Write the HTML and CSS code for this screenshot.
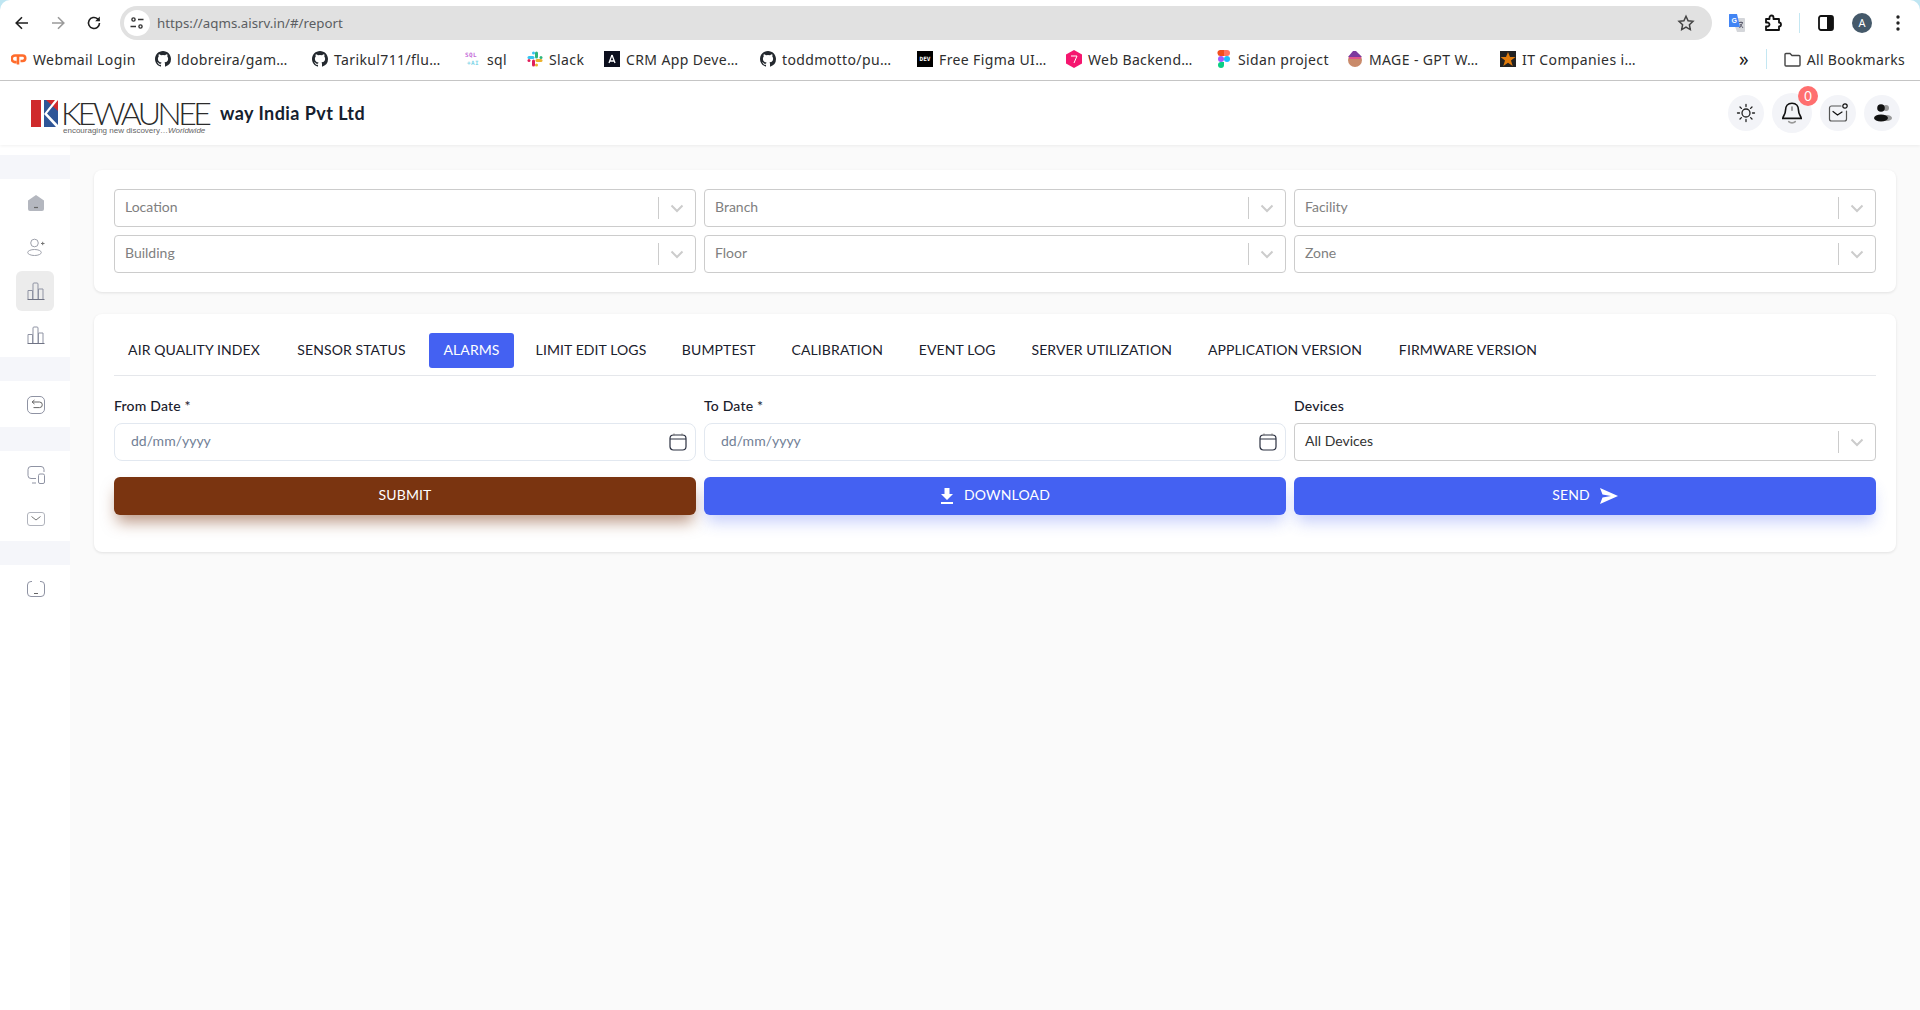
FILE: index.html
```html
<!DOCTYPE html>
<html lang="en">
<head>
	<meta charset="UTF-8">
	<title>Report</title>
	<link rel="stylesheet" href="styles.css">
</head>
<body>
	<div class="chrome">
		<div class="toolbar">
			<span class="tool"><svg width="16" height="16" viewBox="0 0 16 16" fill="none" stroke="#1f1f1f" stroke-width="1.6"><path d="M14 8H2.5M8 2.2 2.2 8 8 13.8"/></svg></span>
			<span class="tool"><svg width="16" height="16" viewBox="0 0 16 16" fill="none" stroke="#9a9a9a" stroke-width="1.6"><path d="M2 8h11.5M8 2.2 13.8 8 8 13.8"/></svg></span>
			<span class="tool"><svg width="16" height="16" viewBox="0 0 16 16" fill="none" stroke="#1f1f1f" stroke-width="1.6"><path d="M13.5 8A5.5 5.5 0 1 1 11.6 3.8L13.5 5.6"/><path d="M13.8 1.6v4.6H9.2z" fill="#1f1f1f" stroke="none"/></svg></span>
			<div class="omnibox">
				<span class="site-chip"><svg width="16" height="16" viewBox="0 0 16 16" fill="none" stroke="#333" stroke-width="1.4"><circle cx="4.5" cy="4.5" r="1.6"/><path d="M9 4.5h5.5M1.5 11.5H7"/><circle cx="11.5" cy="11.5" r="1.6"/></svg></span>
				<span class="url">https://aqms.aisrv.in/#/report</span>
				<svg class="star" width="18" height="18" viewBox="0 0 18 18" fill="none" stroke="#444" stroke-width="1.5"><path d="M9 2.2l2.1 4.5 4.9.6-3.6 3.4.9 4.9L9 13.2l-4.3 2.4.9-4.9L2 7.3l4.9-.6z"/></svg>
			</div>
			<div class="tools-right">
				<span class="tool"><svg width="18" height="20" viewBox="0 0 18 20"><path d="M4 5h12a1 1 0 0 1 1 1v12a1 1 0 0 1-1 1H9z" fill="#d4d6da"/><path d="M11 9.500h4M13 8.500v1M11.500 15l3-5M12 11l3 4" stroke="#556" stroke-width=".9" fill="none"/><path d="M1 1.500A.5.5 0 0 1 1.500 1H9l3 13H1z" fill="#4285f4"/><text class="gt" x="3.500" y="10">G</text></svg></span>
				<span class="tool"><svg width="18" height="18" viewBox="0 0 18 18" fill="none" stroke="#111" stroke-width="1.800"><path d="M2 5h3.500V3.500a2 2 0 0 1 4 0V5H15v3.500a2 2 0 0 1 0 4V16H2v-3.500h1.500a2 2 0 0 0 0-4H2z" stroke-linejoin="round"/></svg></span>
				<span class="tool-sep"></span>
				<span class="tool"><svg width="16" height="16" viewBox="0 0 16 16"><rect x="1" y="1" width="14" height="14" rx="2" fill="none" stroke="#111" stroke-width="1.800"/><rect x="9" y="1" width="6" height="14" fill="#111"/></svg></span>
				<span class="tool"><span class="avatar">A</span></span>
				<span class="tool"><svg width="4" height="16" viewBox="0 0 4 16" fill="#222"><circle cx="2" cy="2" r="1.700"/><circle cx="2" cy="8" r="1.700"/><circle cx="2" cy="14" r="1.700"/></svg></span>
			</div>
		</div>
		<div class="bookmarks">
			<a class="mark"><svg width="16" height="16" viewBox="0 0 16 16" fill="none" stroke="#ff6c2c" stroke-width="2.600"><path d="M6 4.500H4a3.300 3.300 0 0 0 0 6.600h1.500M7 13.500V4.500h4.500a2.700 2.700 0 0 1 0 5.500H9.500"/></svg>Webmail Login</a>
			<a class="mark"><svg class="gh" width="16" height="16" viewBox="0 0 16 16"><use href="#octo"/></svg>ldobreira/gam…</a>
			<a class="mark"><svg class="gh" width="16" height="16" viewBox="0 0 16 16"><use href="#octo"/></svg>Tarikul711/flu…</a>
			<a class="mark"><svg width="16" height="18" viewBox="0 0 16 18"><text class="sqlfav" x="0" y="7" fill="#c56bd8">SQL</text><text class="sqlfav" x="2" y="15" fill="#7fd6e8">+AI</text></svg>sql</a>
			<a class="mark"><svg width="16" height="16" viewBox="0 0 16 16" fill="none" stroke-width="3" stroke-linecap="round"><path d="M2 6.500h4" stroke="#36c5f0"/><path d="M6.500 2v0" stroke="#36c5f0"/><path d="M9.500 2v4" stroke="#2eb67d"/><path d="M14 6.500h0" stroke="#2eb67d"/><path d="M14 9.500h-4" stroke="#ecb22e"/><path d="M9.500 14v0" stroke="#ecb22e"/><path d="M6.500 14v-4" stroke="#e01e5a"/><path d="M2 9.500h0" stroke="#e01e5a"/></svg>Slack</a>
			<a class="mark"><svg width="16" height="16" viewBox="0 0 16 16"><rect width="16" height="16" fill="#0c0f1e"/><path d="M8 4 5 12M8 4l3 8M6 10h4" stroke="#fff" stroke-width="1.300" fill="none"/></svg>CRM App Deve…</a>
			<a class="mark"><svg class="gh" width="16" height="16" viewBox="0 0 16 16"><use href="#octo"/></svg>toddmotto/pu…</a>
			<a class="mark"><span class="dev">DEV</span>Free Figma UI…</a>
			<a class="mark"><svg width="16" height="18" viewBox="0 0 16 18"><path d="M8 0l8 4.500v9L8 18l-8-4.500v-9z" fill="#f5166f"/><path d="M5 6h6L8 13" stroke="#fff" fill="none"/></svg>Web Backend…</a>
			<a class="mark"><svg width="16" height="18" viewBox="0 0 16 18"><path d="M4 0h4v6H5a3 3 0 0 1-1-6z" fill="#f24e1e"/><path d="M8 0h3a3 3 0 0 1 0 6H8z" fill="#ff7262"/><rect x="2" y="6" width="6" height="6" rx="3" fill="#a259ff"/><circle cx="11" cy="9" r="3" fill="#1abcfe"/><path d="M5 12h3v3a3 3 0 1 1-3-3z" fill="#0acf83"/></svg>Sidan project</a>
			<a class="mark"><svg width="16" height="18" viewBox="0 0 16 18"><circle cx="8" cy="10" r="7" fill="#c98a6a"/><path d="M1 7h14L9 1H6z" fill="#7c3a9e"/><rect x="2" y="7" width="12" height="2" fill="#e0568a"/></svg>MAGE - GPT W…</a>
			<a class="mark"><svg width="16" height="16" viewBox="0 0 16 16"><rect width="16" height="16" fill="#222"/><path d="M8 1l2 5h5.500l-4.500 3.500 1.700 5.500L8 11.700 3.300 15 5 9.500.5 6H6z" fill="#e07b0c"/></svg>IT Companies i…</a>
			<div class="marks-right">
				<span class="more">»</span>
				<span class="marks-sep"></span>
				<svg width="17" height="15" viewBox="0 0 17 15" fill="none" stroke="#444" stroke-width="1.400"><path d="M1 2.500A1 1 0 0 1 2 1.500h4l2 2h7a1 1 0 0 1 1 1v8.500a1 1 0 0 1-1 1H2a1 1 0 0 1-1-1z"/></svg>
				<span class="all-marks">All Bookmarks</span>
			</div>
		</div>
	</div>

	<header class="app-header">
		<div class="logo">
			<svg width="27" height="27" viewBox="0 0 27 27"><rect width="10" height="27" fill="#cf2a2c"/><path d="M13 0h14v27H13z" fill="#2f5597"/><path d="M15 0h12v11z" fill="#cf2a2c"/><path d="M13 14 24 0h3L16 13.500 27 25v2h-2L13 14z" fill="#fff"/></svg>
			<div class="logo-text">
				<span class="logo-name">KEWAUNEE</span>
				<span class="logo-tag">encouraging new discovery…<i>Worldwide</i></span>
			</div>
		</div>
		<span class="org">way India Pvt Ltd</span>
		<div class="header-icons">
			<button class="round"><svg width="20" height="20" viewBox="0 0 20 20" fill="none" stroke="#222" stroke-width="1.300" stroke-linecap="round"><circle cx="10" cy="10" r="4"/><path d="M10 1.500v2M10 16.500v2M1.500 10h2M16.500 10h2M4 4l1.400 1.400M14.600 14.600 16 16M4 16l1.400-1.400M14.600 5.400 16 4"/></svg></button>
			<button class="round round-bell"><svg width="26" height="26" viewBox="0 0 24 24" fill="none" stroke="#111" stroke-width="1.500" stroke-linecap="round"><path d="M12 3c-4 0-6 3-6 6.500 0 4-2.500 5.500-2.500 7.500h17c0-2-2.500-3.500-2.500-7.500C18 6 16 3 12 3z"/><path d="M12 6.500v3" stroke="#888"/><path d="M9 20c1.500 1.500 4.500 1.500 6 0" stroke="#999"/></svg><span class="badge">0</span></button>
			<button class="round"><svg width="22" height="22" viewBox="0 0 22 22" fill="none" stroke="#555" stroke-width="1.200" stroke-linecap="round"><path d="M14 4H4.500A2 2 0 0 0 2.500 6v11a2 2 0 0 0 2 2h13a2 2 0 0 0 2-2V9"/><path d="M6 9.500l4.500 3.500 4.500-3" stroke="#111"/><circle cx="18" cy="4" r="2.200" stroke="#111"/></svg></button>
			<button class="round"><svg width="22" height="22" viewBox="0 0 22 22"><circle cx="15" cy="6" r="3" fill="#999"/><ellipse cx="16" cy="16" rx="5" ry="3" fill="#999"/><circle cx="10" cy="6" r="3.800" fill="#111"/><ellipse cx="10" cy="16" rx="7" ry="3.500" fill="#111"/></svg></button>
		</div>
	</header>

	<div class="app-body">
		<nav class="sidebar">
			<div class="side-band"></div>
			<a class="side-item"><svg width="18" height="18" viewBox="0 0 18 18"><path d="M1 6.500 9 1l8 5.500V15a2 2 0 0 1-2 2H3a2 2 0 0 1-2-2z" fill="#b4b7bf"/><path d="M7 13.500h4" stroke="#666" stroke-width="1.200"/></svg></a>
			<a class="side-item"><svg width="18" height="18" viewBox="0 0 18 18" fill="none" stroke="#9ea1ab" stroke-width="1"><circle cx="7.500" cy="5" r="3.800"/><ellipse cx="7.500" cy="14.500" rx="6.800" ry="3"/><path d="M14 5.500h3.500M15.700 3.800v3.400" stroke="#777"/></svg></a>
			<a class="side-item is-active"><svg width="18" height="18" viewBox="0 0 18 18"><use href="#bars"/></svg></a>
			<a class="side-item"><svg width="18" height="18" viewBox="0 0 18 18"><use href="#bars"/></svg></a>
			<div class="side-band"></div>
			<a class="side-item"><svg width="18" height="18" viewBox="0 0 18 18" fill="none" stroke="#8f93a3" stroke-width="1"><rect x=".5" y=".5" width="17" height="17" rx="4.500"/><path d="M6 6h6.500a2.800 2.800 0 0 1 0 5.600H6.500M7.500 4 5 6l2.500 2" stroke="#666"/></svg></a>
			<div class="side-band"></div>
			<a class="side-item"><svg width="18" height="18" viewBox="0 0 18 18" fill="none" stroke="#8f93a3" stroke-width="1"><path d="M17 6V3.500a3 3 0 0 0-3-3H4a3 3 0 0 0-3 3v6a3 3 0 0 0 3 3h5M5 17h4"/><rect x="11.500" y="8" width="6" height="9.500" rx="1.500"/></svg></a>
			<a class="side-item"><svg width="18" height="14" viewBox="0 0 18 14" fill="none" stroke="#b0b3bc" stroke-width="1"><rect x=".5" y=".5" width="17" height="13" rx="2.500"/><path d="M4.500 4.500 9 8l4.500-3.500" stroke="#777"/></svg></a>
			<div class="side-band"></div>
			<a class="side-item"><svg width="18" height="16" viewBox="0 0 18 16" fill="none" stroke="#8f93a3" stroke-width="1"><path d="M5 .5H4A3.500 3.500 0 0 0 .5 4v8A3.500 3.500 0 0 0 4 15.500h10a3.500 3.500 0 0 0 3.500-3.500V4A3.500 3.500 0 0 0 14 .5h-1"/><path d="M7 12.500h4" stroke="#666"/></svg></a>
		</nav>

		<main class="main">
			<section class="card filter-card">
				<div class="grid-3">
					<div class="select"><span class="ph">Location</span><span class="sel-sep"></span><svg class="chev"><use href="#chev"/></svg></div>
					<div class="select"><span class="ph">Branch</span><span class="sel-sep"></span><svg class="chev"><use href="#chev"/></svg></div>
					<div class="select"><span class="ph">Facility</span><span class="sel-sep"></span><svg class="chev"><use href="#chev"/></svg></div>
					<div class="select"><span class="ph">Building</span><span class="sel-sep"></span><svg class="chev"><use href="#chev"/></svg></div>
					<div class="select"><span class="ph">Floor</span><span class="sel-sep"></span><svg class="chev"><use href="#chev"/></svg></div>
					<div class="select"><span class="ph">Zone</span><span class="sel-sep"></span><svg class="chev"><use href="#chev"/></svg></div>
				</div>
			</section>

			<section class="card report-card">
				<ul class="tabs">
					<li>AIR QUALITY INDEX</li>
					<li>SENSOR STATUS</li>
					<li class="selected">ALARMS</li>
					<li>LIMIT EDIT LOGS</li>
					<li>BUMPTEST</li>
					<li>CALIBRATION</li>
					<li>EVENT LOG</li>
					<li>SERVER UTILIZATION</li>
					<li>APPLICATION VERSION</li>
					<li>FIRMWARE VERSION</li>
				</ul>
				<div class="grid-3 form-row">
					<div class="field">
						<label>From Date *</label>
						<div class="date"><span>dd/mm/yyyy</span><svg class="cal"><use href="#cal"/></svg></div>
					</div>
					<div class="field">
						<label>To Date *</label>
						<div class="date"><span>dd/mm/yyyy</span><svg class="cal"><use href="#cal"/></svg></div>
					</div>
					<div class="field">
						<label>Devices</label>
						<div class="select"><span class="val">All Devices</span><span class="sel-sep"></span><svg class="chev"><use href="#chev"/></svg></div>
					</div>
				</div>
				<div class="grid-3 btn-row">
					<button class="btn btn-brown"><span>SUBMIT</span></button>
					<button class="btn btn-blue"><svg width="14" height="16" viewBox="0 0 14 16" fill="#fff"><path d="M4.500 0h5v6H13L7 12 1 6h3.500z"/><rect x="1" y="14" width="12" height="2"/></svg><span>DOWNLOAD</span></button>
					<button class="btn btn-blue"><span>SEND</span><svg width="18" height="16" viewBox="0 0 18 16" fill="#fff"><path d="M0 0l18 8-18 8 2.500-6.500L11 8 2.500 6.500z"/></svg></button>
				</div>
			</section>
		</main>
	</div>

	<svg class="defs" width="0" height="0">
		<symbol id="octo" viewBox="0 0 16 16"><path fill="#24292f" d="M8 0C3.580 0 0 3.580 0 8c0 3.540 2.290 6.530 5.470 7.590.4.070.55-.17.55-.38v-1.340c-2.230.48-2.700-1.070-2.700-1.070-.36-.93-.89-1.170-.89-1.170-.73-.5.050-.49.050-.49.800.060 1.230.83 1.230.83.710 1.220 1.870.870 2.330.66.070-.52.280-.87.510-1.070-1.780-.2-3.640-.89-3.640-3.950 0-.87.310-1.590.820-2.150-.08-.2-.36-1.020.08-2.120 0 0 .67-.21 2.200.820a7.600 7.600 0 0 1 4 0c1.530-1.040 2.200-.82 2.200-.82.44 1.100.16 1.920.08 2.120.51.560.82 1.270.82 2.150 0 3.070-1.870 3.750-3.650 3.950.29.250.54.730.54 1.480v2.200c0 .21.150.46.550.38A8 8 0 0 0 16 8c0-4.420-3.580-8-8-8z"/></symbol>
		<symbol id="bars" viewBox="0 0 18 18"><path d="M.5 17.500h17" stroke="#6f7384" fill="none"/><path d="M1 17V8.500h4.500V17M6 17V2a1 1 0 0 1 1-1h3a1 1 0 0 1 1 1v15M11.500 17V7H16v10" stroke="#8f93a3" fill="none"/></symbol>
		<symbol id="chev" viewBox="0 0 20 20"><path d="M4.500 7.500 10 13l5.500-5.500" fill="none" stroke="#ccc" stroke-width="2"/></symbol>
		<symbol id="cal" viewBox="0 0 18 18"><rect x="1" y="2" width="16" height="15" rx="3.500" fill="none" stroke="#2b3040" stroke-width="1.200"/><path d="M1 6h16" stroke="#2b3040"/><path d="M5 .5v2M13 .5v2" stroke="#777"/></symbol>
	</svg>
</body>
</html>
```

FILE: styles.css
```css
*{
	margin: 0;
	padding: 0;
	box-sizing: border-box;
}
html, body{
	height: 1010px;
	overflow: hidden;
}
body{
	background: #bfe6f2;
	font-family: "Lato", "Noto Sans", sans-serif;
	color: #1a202c;
}
ul{
	list-style: none;
}
a{
	color: inherit;
}
button{
	font-family: inherit;
	border: none;
}
.defs{
	position: absolute;
}

/* browser bars */
.chrome{
	height: 81px;
	background: #fff;
	border-radius: 10px 10px 0 0;
	border-bottom: 1px solid #c7c7c7;
	font-family: "Noto Sans", sans-serif;
}
.toolbar{
	display: flex;
	align-items: center;
	height: 40px;
	padding: 6px 4px 0;
}
.tool{
	width: 36px;
	height: 34px;
	display: flex;
	align-items: center;
	justify-content: center;
	flex: none;
}
.omnibox{
	flex: 1;
	height: 34px;
	margin-left: 8px;
	margin-right: 7px;
	padding: 0 15px 0 4px;
	border-radius: 17px;
	background: #e1e1e1;
	display: flex;
	align-items: center;
}
.site-chip{
	width: 26px;
	height: 26px;
	border-radius: 50%;
	background: #fff;
	display: flex;
	align-items: center;
	justify-content: center;
}
.url{
	margin-left: 7px;
	font-size: 13.300px;
	color: #5b5e62;
	flex: 1;
}
.star{
	margin-right: 2px;
}
.tools-right{
	display: flex;
	align-items: center;
}
.tool-sep{
	width: 1px;
	height: 20px;
	margin: 0 8px 0 8px;
	background: #c4e7f2;
}
.gt{
	font: bold 7px "Liberation Sans", sans-serif;
	fill: #fff;
}
.avatar{
	width: 20px;
	height: 20px;
	border-radius: 50%;
	background: #45596a;
	color: #fff;
	font-size: 11px;
	text-align: center;
	line-height: 20px;
}
.bookmarks{
	height: 40px;
	padding: 0 0 2px 11px;
	display: grid;
	grid-template-columns: 144px 157px 153px 62px 77px 156px 157px 149px 150px 131px 153px 215px 1fr;
	align-items: center;
	font-size: 14px;
	letter-spacing: .38px;
	color: #2e2e2e;
}
.mark{
	display: flex;
	align-items: center;
	gap: 6px;
	white-space: nowrap;
}
.sqlfav{
	font: bold 6px "DejaVu Sans Mono", monospace;
}
.dev{
	width: 16px;
	height: 16px;
	background: #000;
	color: #fff;
	font: bold 6px "DejaVu Sans Mono", monospace;
	letter-spacing: 0;
	line-height: 16px;
	text-align: center;
}
.marks-right{
	display: flex;
	align-items: center;
	justify-content: flex-end;
	padding-right: 15px;
	white-space: nowrap;
	letter-spacing: .3px;
}
.more{
	font-size: 19px;
	line-height: 20px;
	color: #222;
}
.marks-sep{
	width: 1px;
	height: 20px;
	margin: 0 17px 0 17px;
	background: #c4e7f2;
}
.all-marks{
	margin-left: 6px;
}

/* app header */
.app-header{
	position: relative;
	z-index: 2;
	height: 64px;
	padding-left: 31px;
	background: #fff;
	display: flex;
	align-items: center;
	box-shadow: 0 1px 3px rgba(0,0,0,.06);
}
.logo{
	width: 189px;
	display: flex;
	gap: 3px;
	height: 40px;
	padding-top: 4px;
	margin-top: 5px;
}
.logo-text{
	display: flex;
	flex-direction: column;
}
.logo-name{
	font-family: "Lato", sans-serif;
	font-weight: 300;
	font-size: 32px;
	line-height: 26px;
	letter-spacing: -3.500px;
	color: #2b2b2b;
}
.logo-tag{
	font-family: "Liberation Sans", sans-serif;
	font-size: 8px;
	line-height: 10px;
	margin-left: 2px;
	color: #666;
	white-space: nowrap;
}
.org{
	font-size: 18px;
	font-weight: 700;
	letter-spacing: .45px;
	color: #15202e;
}
.header-icons{
	margin-left: auto;
	padding-right: 20px;
	display: flex;
	align-items: center;
	gap: 8px;
}
.round{
	position: relative;
	width: 36px;
	height: 36px;
	border-radius: 50%;
	background: #f3f4f8;
	display: flex;
	align-items: center;
	justify-content: center;
}
.round-bell{
	width: 40px;
	height: 40px;
}
.badge{
	position: absolute;
	top: -7px;
	right: -6px;
	width: 20px;
	height: 20px;
	border-radius: 50%;
	background: #ff6f6f;
	color: #fff;
	font-size: 13px;
	line-height: 20px;
	text-align: center;
}

/* page */
.app-body{
	display: flex;
	height: 865px;
}
.sidebar{
	width: 70px;
	flex: none;
	padding-top: 10px;
	background: #fff;
	display: flex;
	flex-direction: column;
	align-items: center;
	box-shadow: 1px 0 3px rgba(0,0,0,.04);
}
.side-band{
	width: 100%;
	height: 24px;
	background: #f5f6fa;
	flex: none;
}
.side-item{
	width: 38px;
	height: 40px;
	margin: 2px 0;
	padding-left: 2px;
	border-radius: 6px;
	display: flex;
	align-items: center;
	justify-content: center;
	flex: none;
}
.side-item.is-active{
	background: #ececec;
}
.side-band + .side-item{
	margin-top: 4px;
}
.main{
	flex: 1;
	padding: 25px 24px;
	background: #fafafa;
}
.card{
	background: #fff;
	border-radius: 8px;
	box-shadow: 0 1px 3px rgba(0,0,0,.1);
	padding: 19px 20px;
}
.report-card{
	margin-top: 22px;
	padding-bottom: 37px;
}
.grid-3{
	display: grid;
	grid-template-columns: repeat(3, 1fr);
	gap: 8px;
}
.select{
	height: 38px;
	padding-left: 10px;
	border: 1px solid #ccc;
	border-radius: 4px;
	background: #fff;
	display: flex;
	align-items: center;
	font-size: 14px;
}
.ph{
	flex: 1;
	padding-bottom: 3px;
	color: #808080;
}
.val{
	flex: 1;
	padding-bottom: 3px;
	color: #333;
}
.sel-sep{
	width: 1px;
	height: 22px;
	background: #ccc;
}
.chev{
	width: 20px;
	height: 20px;
	margin: 0 8px;
}
.tabs{
	display: grid;
	grid-template-columns: 160px 139px 85px 138px 101.500px 119.500px 104.500px 168.500px 182px 168px;
	gap: 8px;
	height: 43px;
	border-bottom: 1px solid #e5e7eb;
}
.tabs li{
	height: 35px;
	border-radius: 3px;
	font-size: 14px;
	line-height: 34px;
	letter-spacing: .1px;
	text-align: center;
	white-space: nowrap;
	color: #1a202c;
}
.tabs li.selected{
	background: #4461f2;
	color: #fff;
}
.form-row{
	margin-top: 20px;
}
.field label{
	display: block;
	height: 27px;
	font-size: 14px;
	font-weight: 500;
	letter-spacing: .2px;
	line-height: 20px;
}
.date{
	height: 38px;
	padding: 0 8px 0 16px;
	border: 1px solid #e2e8f0;
	border-radius: 8px;
	display: flex;
	align-items: center;
	justify-content: space-between;
	font-size: 14px;
	color: #718096;
}
.date span{
	padding-bottom: 3px;
}
.cal{
	width: 18px;
	height: 18px;
}
.btn-row{
	margin-top: 16px;
}
.btn{
	height: 38px;
	border-radius: 6px;
	color: #fff;
	font-size: 14px;
	display: flex;
	align-items: center;
	justify-content: center;
	gap: 10px;
}
.btn span{
	padding-bottom: 3px;
	letter-spacing: .15px;
}
.btn-brown{
	background: #7a3410;
	box-shadow: 0 10px 15px -3px rgba(122,52,16,.5);
}
.btn-blue{
	background: #4461f2;
	box-shadow: 0 10px 15px -3px rgba(68,97,242,.3);
}
```
